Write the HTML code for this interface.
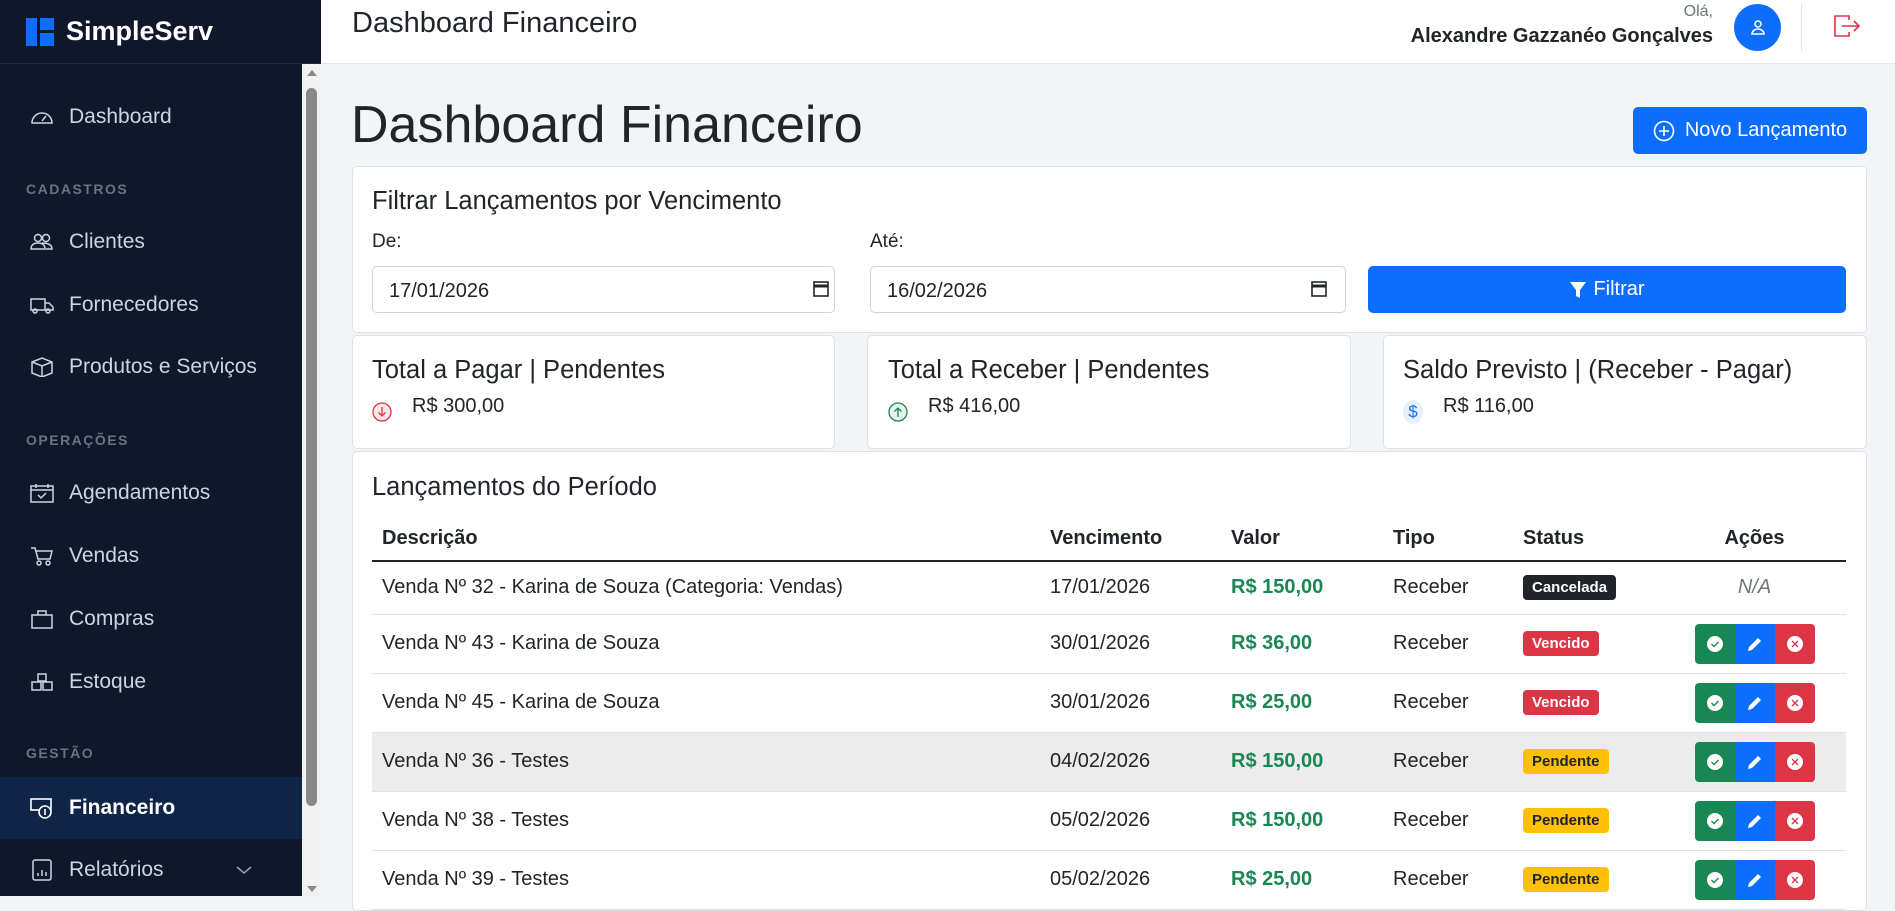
<!DOCTYPE html>
<html><head><meta charset="utf-8"><style>
*{box-sizing:border-box;margin:0;padding:0}
body{width:1895px;height:896px;overflow:hidden;font-family:"Liberation Sans",Arial,sans-serif;background:#f3f4f6;color:#212529;position:relative}
.sb{position:absolute;left:0;top:0;width:321px;height:896px;background:#0f172a}
.logo{height:64px;border-bottom:1px solid #1e293b;display:flex;align-items:center;padding-left:26px;color:#fff;font-weight:bold;font-size:27px}
.logo svg{margin-right:12px}
.nav{position:absolute;left:0;width:302px;display:flex;align-items:center;color:#cbd5e1;font-size:21px}
.nav svg{position:absolute;left:30px}
.nav span{position:absolute;left:69px}
.sec{position:absolute;left:26px;color:#6b7280;font-size:14px;font-weight:bold;letter-spacing:1.5px}
.scr{position:absolute;left:302px;top:64px;width:19px;height:832px;background:#f1f1f1}
.thumb{position:absolute;left:306px;top:88px;width:11px;height:718px;background:#888;border-radius:6px}
.hdr{position:absolute;left:321px;top:0;right:0;height:64px;background:#fff;border-bottom:1px solid #e5e7eb}
.card{position:absolute;background:#fff;border:1px solid #dee2e6;border-radius:5px}
.lbl{position:absolute;font-size:19px}
.inp{position:absolute;top:266px;height:47px;border:1px solid #ced4da;border-radius:5px;background:#fff;font-size:20px;padding:13px 16px 0}
.btn{position:absolute;background:#0d6efd;color:#fff;border-radius:5px;display:flex;align-items:center;justify-content:center;font-size:20px}
table{position:absolute;left:372px;top:516px;width:1474px;border-collapse:collapse;font-size:20px}
th{text-align:left;font-weight:bold;height:45px;padding:0 10px;border-bottom:2px solid #212529}
td{padding:0 10px;border-bottom:1px solid #dee2e6;height:59px}
tr.r1 td{height:53px}
tr.hl td{background:#ececec}
.val{color:#198754;font-weight:bold}
.bdg{display:inline-block;font-size:15px;font-weight:bold;padding:4px 9px;border-radius:4px;color:#fff}
.acts{display:flex;justify-content:center}
.acts div{width:40px;height:40px;display:flex;align-items:center;justify-content:center}
</style></head><body>
<div class="sb">
<div class="logo"><svg width="28" height="28" viewBox="0 0 28 28"><rect x="0" y="0" width="11" height="28" fill="#0d6efd"/><rect x="14" y="0" width="14" height="12" fill="#0d6efd"/><rect x="14" y="15" width="14" height="13" fill="#0d6efd"/></svg>SimpleServ</div>
<div class="nav" style="top:97px;height:40px"><svg width="24" height="20" viewBox="0 0 24 20" fill="none" stroke="#cbd5e1" stroke-width="1.5"><path d="M2 16a10 10 0 1 1 20 0z"/><path d="M12 14l4-5"/></svg><span>Dashboard</span></div>
<div class="sec" style="top:181px">CADASTROS</div>
<div class="nav" style="top:222px;height:40px"><svg width="24" height="20" viewBox="0 0 24 20" fill="none" stroke="#cbd5e1" stroke-width="1.5"><circle cx="8" cy="6" r="3.5"/><circle cx="16" cy="6" r="3.5"/><path d="M1 17c0-4 3-6 7-6s7 2 7 6zM12 11c5 0 10 1 10 6h-6"/></svg><span>Clientes</span></div>
<div class="nav" style="top:285px;height:40px"><svg width="24" height="20" viewBox="0 0 24 20" fill="none" stroke="#cbd5e1" stroke-width="1.5"><path d="M1 4h14v11H1zM15 8h4l4 4v3h-8"/><circle cx="5" cy="16" r="2"/><circle cx="18" cy="16" r="2"/></svg><span>Fornecedores</span></div>
<div class="nav" style="top:347px;height:40px"><svg width="24" height="20" viewBox="0 0 24 20" fill="none" stroke="#cbd5e1" stroke-width="1.5"><path d="M2 5l10-4 10 4v11l-10 4-10-4zM2 5l10 4 10-4M12 9v11"/></svg><span>Produtos e Serviços</span></div>
<div class="sec" style="top:432px">OPERAÇÕES</div>
<div class="nav" style="top:473px;height:40px"><svg width="24" height="20" viewBox="0 0 24 20" fill="none" stroke="#cbd5e1" stroke-width="1.5"><rect x="1" y="3" width="22" height="16"/><path d="M1 7h22M6 1v4M18 1v4M8 12l3 3 5-5"/></svg><span>Agendamentos</span></div>
<div class="nav" style="top:536px;height:40px"><svg width="24" height="20" viewBox="0 0 24 20" fill="none" stroke="#cbd5e1" stroke-width="1.5"><path d="M1 2h4l3 11h12l2-8H6"/><circle cx="9" cy="17" r="2"/><circle cx="18" cy="17" r="2"/></svg><span>Vendas</span></div>
<div class="nav" style="top:599px;height:40px"><svg width="24" height="20" viewBox="0 0 24 20" fill="none" stroke="#cbd5e1" stroke-width="1.5"><rect x="2" y="6" width="20" height="13"/><path d="M8 6V2h8v4"/></svg><span>Compras</span></div>
<div class="nav" style="top:662px;height:40px"><svg width="24" height="20" viewBox="0 0 24 20" fill="none" stroke="#cbd5e1" stroke-width="1.5"><path d="M8 2h8v7H8zM2 10h9v8H2zM13 10h9v8h-9z"/></svg><span>Estoque</span></div>
<div class="sec" style="top:745px">GESTÃO</div>
<div class="nav" style="top:777px;height:62px;background:#0f2547;color:#fff;font-weight:bold"><svg width="24" height="22" viewBox="0 0 24 22" fill="none" stroke="#fff" stroke-width="1.6"><rect x="1" y="2" width="20" height="11"/><circle cx="15" cy="15" r="6" fill="#0f2547"/><path d="M15 12v6"/></svg><span>Financeiro</span></div>
<div class="nav" style="top:850px;height:40px"><svg width="24" height="22" viewBox="0 0 24 22" fill="none" stroke="#cbd5e1" stroke-width="1.5"><rect x="3" y="1" width="18" height="20" rx="2"/><path d="M8 17v-3M12 17v-6M16 17v-4"/></svg><span>Relatórios</span><svg style="left:236px" width="16" height="10" viewBox="0 0 16 10" fill="none" stroke="#94a3b8" stroke-width="1.5"><path d="M1 2l7 6 7-6"/></svg></div>
</div>
<div class="scr"></div><div class="thumb"></div>
<div style="position:absolute;left:307px;top:70px;width:0;height:0;border-left:5px solid transparent;border-right:5px solid transparent;border-bottom:6px solid #888"></div>
<div class="hdr">
<div style="position:absolute;left:31px;top:7px;font-size:29px">Dashboard Financeiro</div>
<div style="position:absolute;right:182px;top:3px;font-size:16px;color:#6c757d">Olá,</div>
<div style="position:absolute;right:182px;top:25px;font-size:20px;font-weight:bold">Alexandre Gazzanéo Gonçalves</div>
<div style="position:absolute;left:1413px;top:4px;width:47px;height:47px;border-radius:50%;background:#0d6efd;display:flex;align-items:center;justify-content:center"><svg width="18" height="18" viewBox="0 0 18 18" fill="none" stroke="#fff" stroke-width="1.6"><circle cx="9" cy="5" r="3"/><path d="M3 15c0-3 3-5 6-5s6 2 6 5z"/></svg></div>
<div style="position:absolute;left:1480px;top:4px;width:1px;height:47px;background:#dee2e6"></div>
<svg style="position:absolute;left:1512px;top:14px" width="28" height="24" viewBox="0 0 28 24" fill="none" stroke="#dc3545" stroke-width="1.6"><path d="M16 6V2H2v20h14v-4M9 12h17M21 7l5 5-5 5"/></svg>
</div>
<div style="position:absolute;left:351px;top:95px;font-size:52px">Dashboard Financeiro</div>
<div class="btn" style="left:1633px;top:107px;width:234px;height:47px"><svg width="22" height="22" viewBox="0 0 22 22" fill="none" stroke="#fff" stroke-width="1.6" style="margin-right:10px"><circle cx="11" cy="11" r="9.5"/><path d="M11 6v10M6 11h10"/></svg>Novo Lançamento</div>
<div class="card" style="left:352px;top:166px;width:1515px;height:167px"></div>
<div class="lbl" style="left:372px;top:187px;font-size:25.5px">Filtrar Lançamentos por Vencimento</div>
<div class="lbl" style="left:372px;top:231px">De:</div>
<div class="lbl" style="left:870px;top:231px">Até:</div>
<div class="inp" style="left:372px;width:463px">17/01/2026</div>
<div class="inp" style="left:870px;width:476px">16/02/2026</div>
<svg style="position:absolute;left:813px;top:280px" width="16" height="17" viewBox="0 0 16 17" fill="none" stroke="#212529" stroke-width="1.6"><rect x="1" y="2" width="14" height="14"/><path d="M1 6h14" stroke-width="3"/></svg>
<svg style="position:absolute;left:1311px;top:280px" width="16" height="17" viewBox="0 0 16 17" fill="none" stroke="#212529" stroke-width="1.6"><rect x="1" y="2" width="14" height="14"/><path d="M1 6h14" stroke-width="3"/></svg>
<div class="btn" style="left:1368px;top:266px;width:478px;height:47px"><svg width="18" height="18" viewBox="0 0 18 18" style="margin-right:6px"><path d="M1 1h16l-6 8v8l-4-2V9z" fill="#fff"/></svg>Filtrar</div>
<div class="card" style="left:352px;top:335px;width:483px;height:114px"></div>
<div class="card" style="left:867px;top:335px;width:484px;height:114px"></div>
<div class="card" style="left:1383px;top:335px;width:484px;height:114px"></div>
<div class="lbl" style="left:372px;top:356px;font-size:25.5px">Total a Pagar | Pendentes</div>
<div class="lbl" style="left:888px;top:356px;font-size:25.5px">Total a Receber | Pendentes</div>
<div class="lbl" style="left:1403px;top:356px;font-size:25.5px">Saldo Previsto | (Receber - Pagar)</div>
<svg style="position:absolute;left:372px;top:402px" width="20" height="20" viewBox="0 0 20 20" fill="none" stroke="#dc3545" stroke-width="1.3"><circle cx="10" cy="10" r="9" fill="#fbe7e9"/><path d="M10 5v9M6.5 10.5l3.5 3.5 3.5-3.5"/></svg>
<svg style="position:absolute;left:888px;top:402px" width="20" height="20" viewBox="0 0 20 20" fill="none" stroke="#198754" stroke-width="1.3"><circle cx="10" cy="10" r="9" fill="#e6f3ec"/><path d="M10 15V6M6.5 9.5L10 6l3.5 3.5"/></svg>
<div style="position:absolute;left:1403px;top:400px;width:20px;height:24px;border-radius:50%;background:#e7f0ff;color:#0d6efd;font-size:17px;text-align:center;line-height:24px">$</div>
<div class="lbl" style="left:412px;top:395px;font-size:20px">R$ 300,00</div>
<div class="lbl" style="left:928px;top:395px;font-size:20px">R$ 416,00</div>
<div class="lbl" style="left:1443px;top:395px;font-size:20px">R$ 116,00</div>
<div class="card" style="left:352px;top:451px;width:1515px;height:460px"></div>
<div class="lbl" style="left:372px;top:473px;font-size:25.5px">Lançamentos do Período</div>
<table>
<tr><th style="width:668px">Descrição</th><th style="width:181px">Vencimento</th><th style="width:162px">Valor</th><th style="width:130px">Tipo</th><th style="width:150px">Status</th><th style="text-align:center">Ações</th></tr>
<tr class="r1"><td>Venda Nº 32 - Karina de Souza (Categoria: Vendas)</td><td>17/01/2026</td><td class="val">R$ 150,00</td><td>Receber</td><td><span class="bdg" style="background:#212529">Cancelada</span></td><td style="text-align:center;color:#6c757d;font-style:italic">N/A</td></tr>
<tr><td>Venda Nº 43 - Karina de Souza</td><td>30/01/2026</td><td class="val">R$ 36,00</td><td>Receber</td><td><span class="bdg" style="background:#dc3545">Vencido</span></td><td><div class="acts"><div style="background:#198754;border-radius:4px 0 0 4px"><svg width="18" height="18" viewBox="0 0 18 18"><circle cx="9" cy="9" r="8" fill="#fff"/><path d="M5.5 9l2.5 2.5 4.5-4.5" fill="none" stroke="#198754" stroke-width="1.4"/></svg></div><div style="background:#0d6efd"><svg width="18" height="18" viewBox="0 0 18 18"><path d="M2 16l1-4 9-9 3 3-9 9z" fill="#fff"/></svg></div><div style="background:#dc3545;border-radius:0 4px 4px 0"><svg width="18" height="18" viewBox="0 0 18 18"><circle cx="9" cy="9" r="8" fill="#fff"/><path d="M6 6l6 6M12 6l-6 6" stroke="#dc3545" stroke-width="1.3"/></svg></div></div></td></tr>
<tr><td>Venda Nº 45 - Karina de Souza</td><td>30/01/2026</td><td class="val">R$ 25,00</td><td>Receber</td><td><span class="bdg" style="background:#dc3545">Vencido</span></td><td><div class="acts"><div style="background:#198754;border-radius:4px 0 0 4px"><svg width="18" height="18" viewBox="0 0 18 18"><circle cx="9" cy="9" r="8" fill="#fff"/><path d="M5.5 9l2.5 2.5 4.5-4.5" fill="none" stroke="#198754" stroke-width="1.4"/></svg></div><div style="background:#0d6efd"><svg width="18" height="18" viewBox="0 0 18 18"><path d="M2 16l1-4 9-9 3 3-9 9z" fill="#fff"/></svg></div><div style="background:#dc3545;border-radius:0 4px 4px 0"><svg width="18" height="18" viewBox="0 0 18 18"><circle cx="9" cy="9" r="8" fill="#fff"/><path d="M6 6l6 6M12 6l-6 6" stroke="#dc3545" stroke-width="1.3"/></svg></div></div></td></tr>
<tr class="hl"><td>Venda Nº 36 - Testes</td><td>04/02/2026</td><td class="val">R$ 150,00</td><td>Receber</td><td><span class="bdg" style="background:#ffc107;color:#212529">Pendente</span></td><td><div class="acts"><div style="background:#198754;border-radius:4px 0 0 4px"><svg width="18" height="18" viewBox="0 0 18 18"><circle cx="9" cy="9" r="8" fill="#fff"/><path d="M5.5 9l2.5 2.5 4.5-4.5" fill="none" stroke="#198754" stroke-width="1.4"/></svg></div><div style="background:#0d6efd"><svg width="18" height="18" viewBox="0 0 18 18"><path d="M2 16l1-4 9-9 3 3-9 9z" fill="#fff"/></svg></div><div style="background:#dc3545;border-radius:0 4px 4px 0"><svg width="18" height="18" viewBox="0 0 18 18"><circle cx="9" cy="9" r="8" fill="#fff"/><path d="M6 6l6 6M12 6l-6 6" stroke="#dc3545" stroke-width="1.3"/></svg></div></div></td></tr>
<tr><td>Venda Nº 38 - Testes</td><td>05/02/2026</td><td class="val">R$ 150,00</td><td>Receber</td><td><span class="bdg" style="background:#ffc107;color:#212529">Pendente</span></td><td><div class="acts"><div style="background:#198754;border-radius:4px 0 0 4px"><svg width="18" height="18" viewBox="0 0 18 18"><circle cx="9" cy="9" r="8" fill="#fff"/><path d="M5.5 9l2.5 2.5 4.5-4.5" fill="none" stroke="#198754" stroke-width="1.4"/></svg></div><div style="background:#0d6efd"><svg width="18" height="18" viewBox="0 0 18 18"><path d="M2 16l1-4 9-9 3 3-9 9z" fill="#fff"/></svg></div><div style="background:#dc3545;border-radius:0 4px 4px 0"><svg width="18" height="18" viewBox="0 0 18 18"><circle cx="9" cy="9" r="8" fill="#fff"/><path d="M6 6l6 6M12 6l-6 6" stroke="#dc3545" stroke-width="1.3"/></svg></div></div></td></tr>
<tr><td>Venda Nº 39 - Testes</td><td>05/02/2026</td><td class="val">R$ 25,00</td><td>Receber</td><td><span class="bdg" style="background:#ffc107;color:#212529">Pendente</span></td><td><div class="acts"><div style="background:#198754;border-radius:4px 0 0 4px"><svg width="18" height="18" viewBox="0 0 18 18"><circle cx="9" cy="9" r="8" fill="#fff"/><path d="M5.5 9l2.5 2.5 4.5-4.5" fill="none" stroke="#198754" stroke-width="1.4"/></svg></div><div style="background:#0d6efd"><svg width="18" height="18" viewBox="0 0 18 18"><path d="M2 16l1-4 9-9 3 3-9 9z" fill="#fff"/></svg></div><div style="background:#dc3545;border-radius:0 4px 4px 0"><svg width="18" height="18" viewBox="0 0 18 18"><circle cx="9" cy="9" r="8" fill="#fff"/><path d="M6 6l6 6M12 6l-6 6" stroke="#dc3545" stroke-width="1.3"/></svg></div></div></td></tr>
</table>
<div style="position:absolute;left:307px;top:886px;width:0;height:0;border-left:5px solid transparent;border-right:5px solid transparent;border-top:6px solid #888"></div>
</body></html>
